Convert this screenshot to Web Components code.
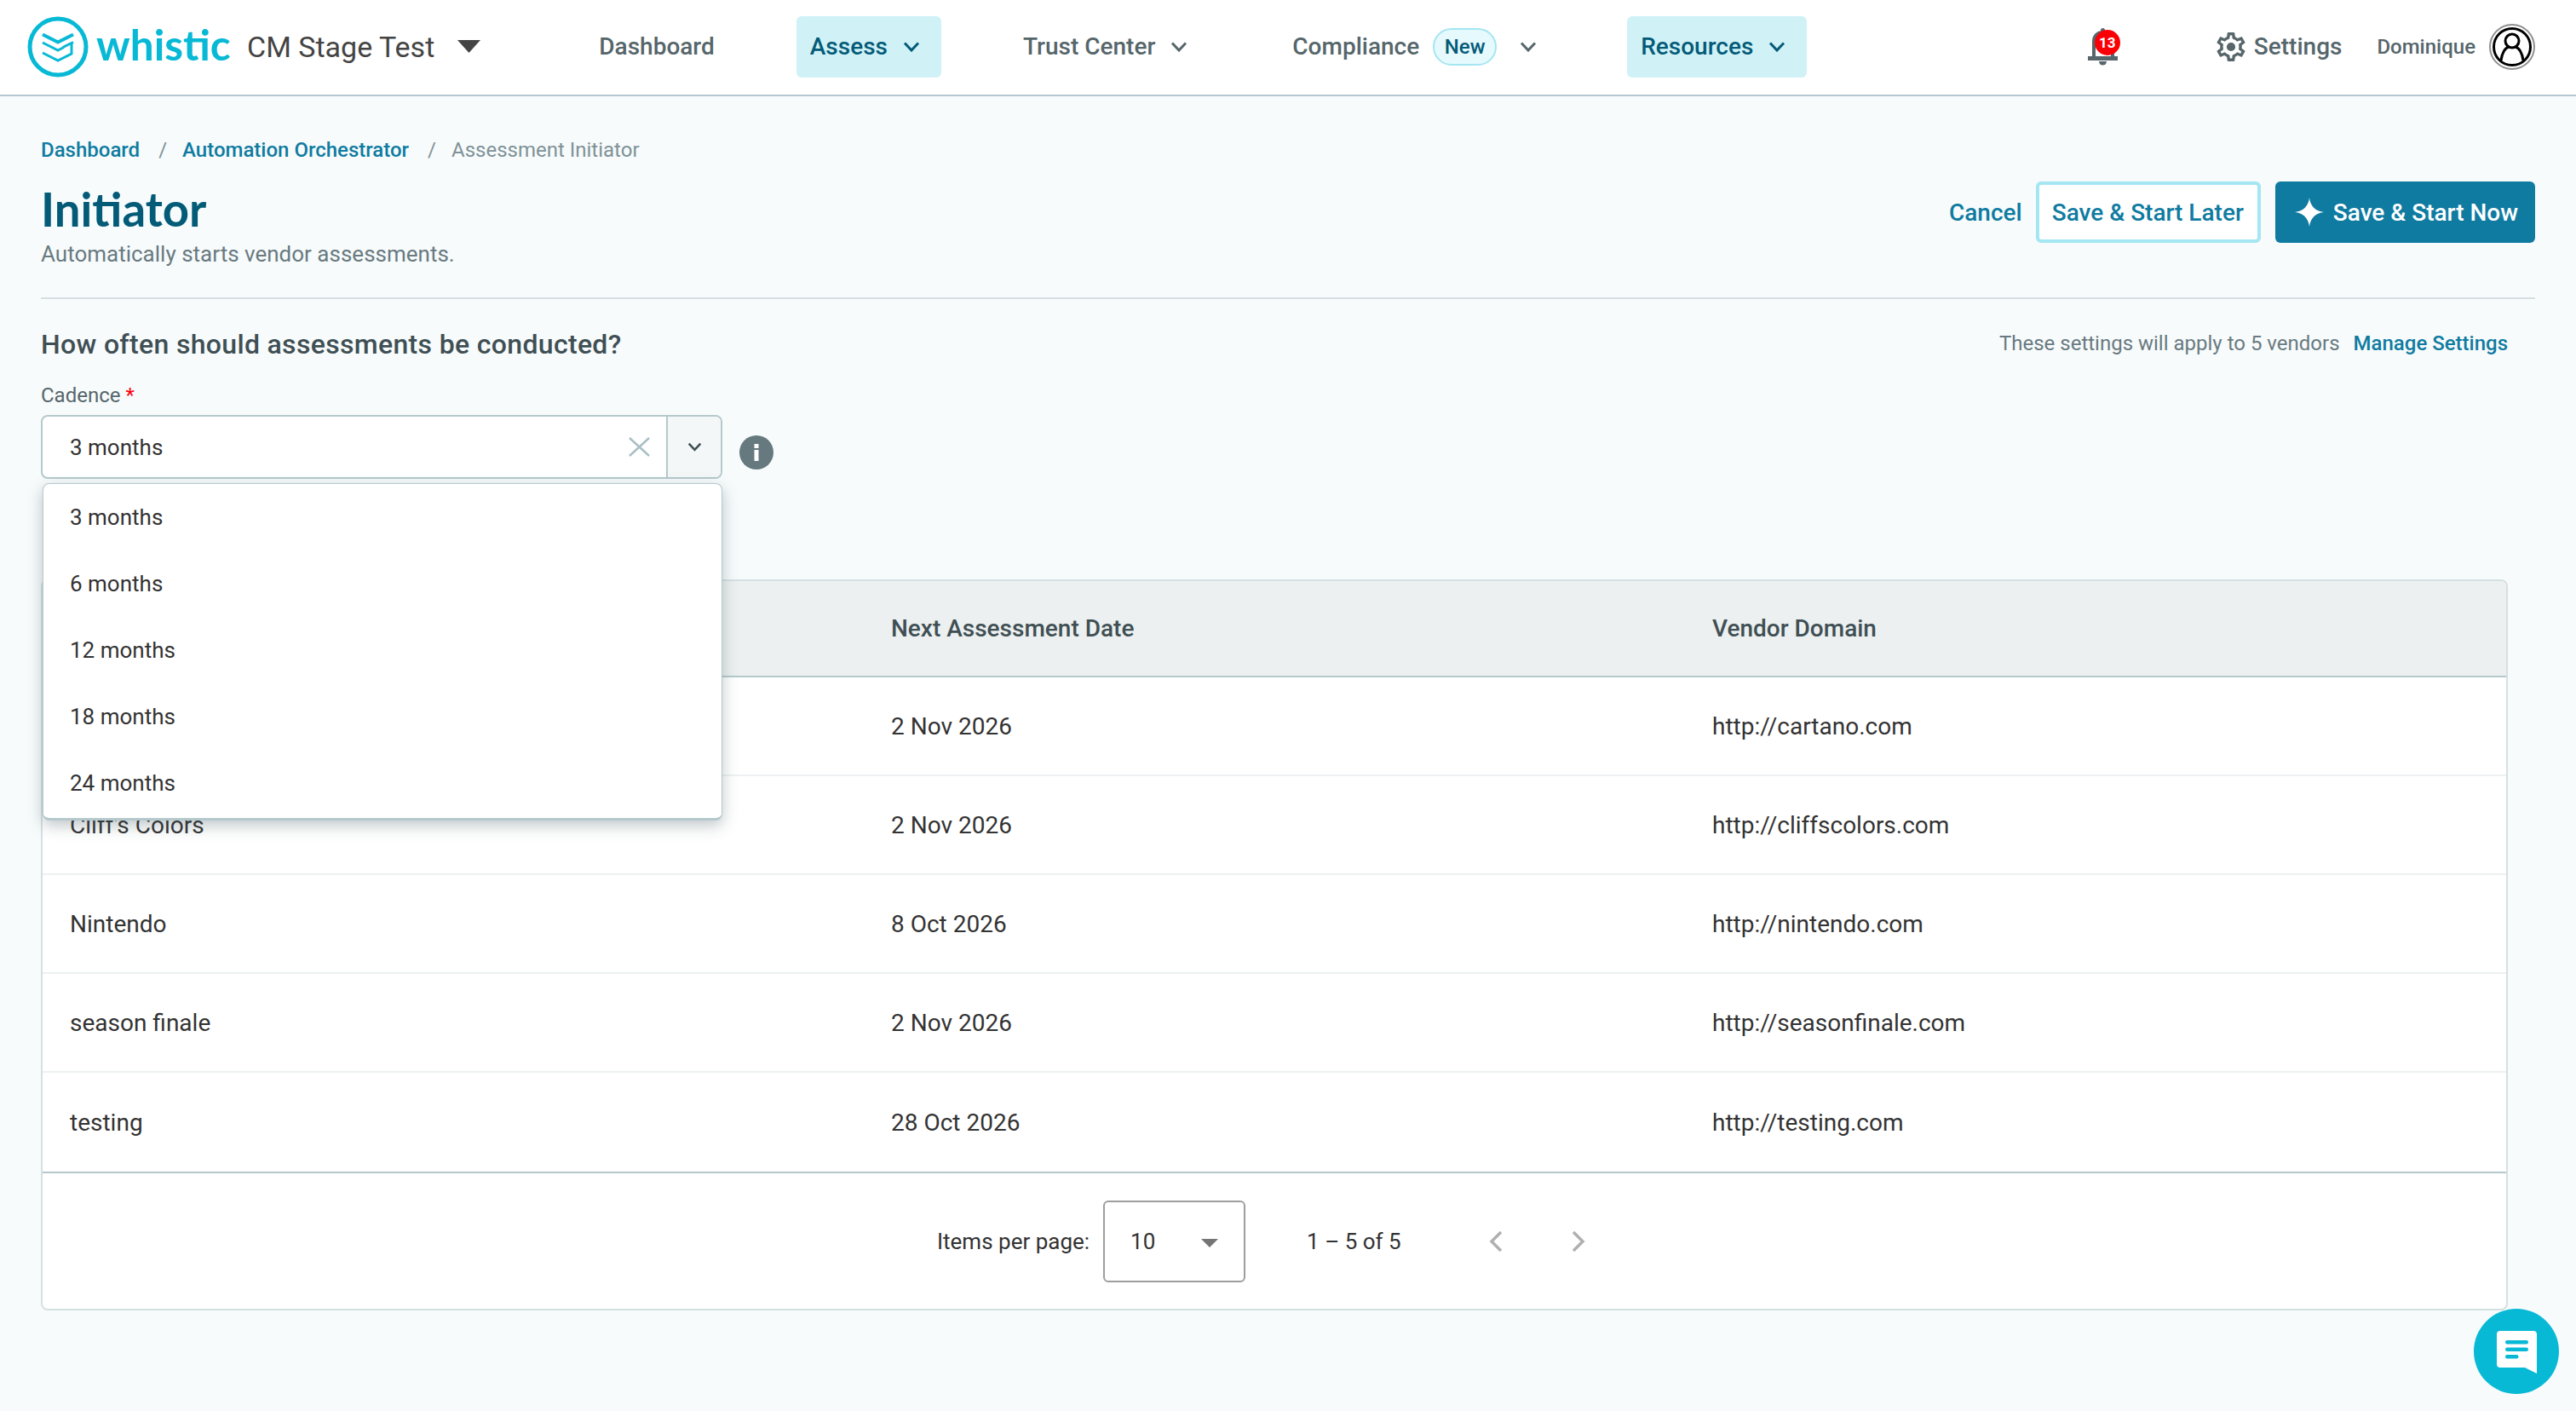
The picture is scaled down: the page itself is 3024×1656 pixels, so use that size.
<!DOCTYPE html>
<html lang="en">
<head>
<meta charset="utf-8">
<title>Initiator</title>
<style>
html, body { margin: 0; background: #f7fbfc; font-family: Roboto, "Liberation Sans", sans-serif; }
body { width: 3024px; height: 1656px; overflow: hidden; }
</style>
</head>
<body>
<wh-app>
    <wh-header slot="header"></wh-header>
    <wh-page-title></wh-page-title>
    <wh-cadence-section></wh-cadence-section>
    <wh-vendor-table>
        <wh-vendor-row head next="Next Assessment Date" domain="Vendor Domain"></wh-vendor-row>
        <wh-vendor-row next="2 Nov 2026" domain="http://cartano.com"></wh-vendor-row>
        <wh-vendor-row name="Cliff's Colors" next="2 Nov 2026" domain="http://cliffscolors.com"></wh-vendor-row>
        <wh-vendor-row name="Nintendo" next="8 Oct 2026" domain="http://nintendo.com"></wh-vendor-row>
        <wh-vendor-row name="season finale" next="2 Nov 2026" domain="http://seasonfinale.com"></wh-vendor-row>
        <wh-vendor-row name="testing" next="28 Oct 2026" domain="http://testing.com" last></wh-vendor-row>
        <wh-paginator slot="footer"></wh-paginator>
    </wh-vendor-table>
</wh-app>
<wh-chat-button></wh-chat-button>

<script>
const CHEVRON = `<svg width="20" height="12" viewBox="0 0 20 12" fill="none" stroke="currentColor" stroke-width="3"><path d="M2 1.5l8 8.5 8-8.5"/></svg>`;

class WhApp extends HTMLElement {
    constructor() {
        super();
        this.attachShadow({ mode: 'open' });
        this.shadowRoot.innerHTML = `
            <style>
                :host { display: block; height: 1656px; box-sizing: border-box; }
                main { display: block; padding: 0 48px; }
            </style>
            <slot name="header"></slot>
            <main><slot></slot></main>
        `;
    }
}

class WhNavItem extends HTMLElement {
    constructor() {
        super();
        this.attachShadow({ mode: 'open' });
        this.shadowRoot.innerHTML = `
            <style>
                :host {
                    display: flex;
                    align-items: center;
                    box-sizing: border-box;
                    height: 72px;
                    padding: 0 25px 0 16px;
                    border-radius: 6px;
                    color: #56666b;
                    font-size: 28px;
                    font-weight: 500;
                    white-space: nowrap;
                }
                :host([active]) { background: #d0f2f7; color: #045b78; }
                svg { margin-left: var(--chevron-gap, 18px); display: block; }
                :host([plain]) { padding-right: 16px; }
                :host([plain]) svg { display: none; }
            </style>
            <slot></slot>${CHEVRON}
        `;
    }
}

class WhHeader extends HTMLElement {
    constructor() {
        super();
        this.attachShadow({ mode: 'open' });
        this.shadowRoot.innerHTML = `
            <style>
                :host {
                    display: flex;
                    align-items: center;
                    box-sizing: border-box;
                    height: 113px;
                    background: #fff;
                    border-bottom: 2px solid #b6c8d0;
                    padding: 0 48px 2px 32px;
                }
                .logo { display: block; flex: none; }
                .word {
                    font-family: Lato, sans-serif;
                    font-size: 49.500px;
                    font-weight: 700;
                    color: #08b9d6;
                    margin-left: 9px;
                    width: 157px;
                    line-height: 1;
                    position: relative;
                    top: -2px;
                }
                .tenant { font-size: 34px; color: #444; margin-left: 20px; white-space: nowrap; }
                .caret { margin-left: 27px; display: block; }
                nav { display: flex; align-items: center; gap: 80px; margin-left: 123px; }
                .new {
                    display: inline-flex;
                    align-items: center;
                    justify-content: center;
                    box-sizing: border-box;
                    width: 75px;
                    height: 44px;
                    margin-left: 16px;
                    border: 2px solid #a4e6f2;
                    border-radius: 22px;
                    background: #e6f9fc;
                    color: #045b78;
                    font-size: 24px;
                }
                .compliance { margin: 0 1px 0 2px; --chevron-gap: 27px; }
                .right { display: flex; align-items: center; margin-left: auto; }
                .bell { position: relative; width: 35px; height: 44px; margin-right: 116px; }
                .bell svg { display: block; }
                .badge {
                    position: absolute;
                    left: 8px;
                    top: 2px;
                    width: 30px;
                    height: 30px;
                    border-radius: 50%;
                    background: #fb0007;
                    color: #fff;
                    font-size: 17px;
                    font-weight: 700;
                    display: flex;
                    align-items: center;
                    justify-content: center;
                }
                .settings { display: flex; align-items: center; color: #56666b; font-size: 28px; font-weight: 500; }
                .settings svg { margin-right: 10px; display: block; }
                .user { color: #56666b; font-size: 24px; font-weight: 500; margin-left: 41px; margin-right: 16px; }
                .avatar { display: block; }
            </style>
            <svg class="logo" width="72" height="72" viewBox="0 0 72 72" fill="none" stroke="#08b9d6">
                <circle cx="36" cy="36" r="33" stroke-width="5"/>
                <path d="M18 21.500l18 9 18-9" stroke-width="4" stroke-linejoin="miter"/>
                <path d="M18 31l18 9 7-3.500" stroke-width="3"/>
                <path d="M18 43l18 9 16-8V31.500" stroke-width="3"/>
                <path d="M43 37v-1l11-5.500" stroke-width="3"/>
            </svg>
            <span class="word">whistic</span>
            <span class="tenant">CM Stage Test</span>
            <svg class="caret" width="27" height="15" viewBox="0 0 27 15"><path d="M0 0h27L13.500 15z" fill="#444"/></svg>
            <nav>
                <wh-nav-item plain>Dashboard</wh-nav-item>
                <wh-nav-item active>Assess</wh-nav-item>
                <wh-nav-item>Trust Center</wh-nav-item>
                <wh-nav-item class="compliance"><span>Compliance</span><span class="new">New</span></wh-nav-item>
                <wh-nav-item active>Resources</wh-nav-item>
            </nav>
            <div class="right">
                <div class="bell">
                    <svg width="35" height="44" viewBox="0 0 35 44" fill="none">
                        <path d="M7 35V16C7 9 11 5 18 5s11 4 11 11v19" stroke="#56666b" stroke-width="4"/>
                        <path d="M15 5V2.500a2.500 2.500 0 0 1 5 0V5z" fill="#56666b"/>
                        <rect x="0" y="33" width="35" height="5" fill="#56666b"/>
                        <path d="M13 39h9a4.500 4.500 0 0 1-9 0z" fill="#56666b"/>
                    </svg>
                    <span class="badge">13</span>
                </div>
                <div class="settings">
                    <svg width="34" height="34" viewBox="2 2 20 20" fill="#56666b">
                        <path d="M19.43 12.98c.04-.32.07-.64.07-.98 0-.34-.03-.66-.07-.98l2.11-1.65c.19-.15.24-.42.12-.64l-2-3.46c-.09-.16-.26-.25-.44-.25-.06 0-.12.01-.17.03l-2.49 1c-.52-.4-1.08-.73-1.69-.98l-.38-2.65C14.46 2.18 14.25 2 14 2h-4c-.25 0-.46.18-.49.42l-.38 2.65c-.61.25-1.17.59-1.69.98l-2.49-1c-.06-.02-.12-.03-.18-.03-.17 0-.34.09-.43.25l-2 3.46c-.13.22-.07.49.12.64l2.11 1.65c-.04.32-.07.65-.07.98 0 .33.03.66.07.98l-2.11 1.65c-.19.15-.24.42-.12.64l2 3.46c.09.16.26.25.44.25.06 0 .12-.01.17-.03l2.49-1c.52.4 1.08.73 1.69.98l.38 2.65c.03.24.24.42.49.42h4c.25 0 .46-.18.49-.42l.38-2.65c.61-.25 1.17-.59 1.69-.98l2.49 1c.06.02.12.03.18.03.17 0 .34-.09.43-.25l2-3.46c.12-.22.07-.49-.12-.64l-2.11-1.65zm-1.98-1.71c.04.31.05.52.05.73 0 .21-.02.43-.05.73l-.14 1.13.89.7 1.08.84-.7 1.21-1.27-.51-1.04-.42-.9.68c-.43.32-.84.56-1.25.73l-1.06.43-.16 1.13-.2 1.35h-1.4l-.19-1.35-.16-1.13-1.06-.43c-.43-.18-.83-.41-1.23-.71l-.91-.7-1.06.43-1.27.51-.7-1.21 1.08-.84.89-.7-.14-1.13c-.03-.31-.05-.54-.05-.74s.02-.43.05-.73l.14-1.13-.89-.7-1.08-.84.7-1.21 1.27.51 1.04.42.9-.68c.43-.32.84-.56 1.25-.73l1.06-.43.16-1.13.2-1.35h1.39l.19 1.35.16 1.13 1.06.43c.43.18.83.41 1.23.71l.91.7 1.06-.43 1.27-.51.7 1.21-1.07.85-.89.7.14 1.13z"/>
                        <circle cx="12" cy="12" r="3"/>
                    </svg>
                    Settings
                </div>
                <span class="user">Dominique</span>
                <svg class="avatar" width="54" height="54" viewBox="0 0 54 54" fill="none">
                    <circle cx="27" cy="27" r="26" stroke="#8f8f8f" stroke-width="2"/>
                    <circle cx="27" cy="27" r="21.500" stroke="#000" stroke-width="3"/>
                    <circle cx="27" cy="20" r="8" stroke="#000" stroke-width="3"/>
                    <path d="M14 43c1-9 5-15 9-16M40 43c-1-9-5-15-9-16" stroke="#000" stroke-width="3"/>
                </svg>
            </div>
        `;
    }
}

class WhPageTitle extends HTMLElement {
    constructor() {
        super();
        this.attachShadow({ mode: 'open' });
        this.shadowRoot.innerHTML = `
            <style>
                :host {
                    display: block;
                    box-sizing: border-box;
                    height: 238px;
                    border-bottom: 2px solid #d5dfe3;
                    padding-top: 49px;
                }
                .crumbs { display: flex; font-size: 24px; line-height: 28px; color: #7f9297; }
                .crumbs b { font-weight: 500; color: #0f7ba1; }
                .crumbs i { font-style: normal; margin: 0 18px 0 22px; }
                .row { display: flex; justify-content: space-between; align-items: flex-start; }
                h1 {
                    margin: 23px 0 0;
                    font-family: Lato, sans-serif;
                    font-size: 54.500px;
                    line-height: 64px;
                    font-weight: 700;
                    color: #045b78;
                }
                p { margin: 5px 0 0; font-size: 26px; line-height: 32px; color: #697a80; }
                .actions { display: flex; align-items: center; margin-top: 23px; }
                .cancel { font-size: 28px; font-weight: 500; color: #0f7ba1; margin-right: 16px; }
                .btn {
                    display: flex;
                    align-items: center;
                    box-sizing: border-box;
                    height: 72px;
                    border-radius: 6px;
                    font-size: 28px;
                    font-weight: 500;
                    white-space: nowrap;
                }
                .later { background: #fff; border: 4px solid #a4e6f2; color: #0f7ba1; padding: 0 16px 0 15px; margin-right: 17px; }
                .now { background: #0f7ba1; color: #fff; padding: 0 20px 0 23px; }
                .now svg { margin-right: 11px; display: block; }
            </style>
            <div class="crumbs"><b>Dashboard</b><i>/</i><b>Automation Orchestrator</b><i>/</i><span>Assessment Initiator</span></div>
            <div class="row">
                <div>
                    <h1>Initiator</h1>
                    <p>Automatically starts vendor assessments.</p>
                </div>
                <div class="actions">
                    <span class="cancel">Cancel</span>
                    <span class="btn later">Save &amp; Start Later</span>
                    <span class="btn now">
                        <svg width="34" height="34" viewBox="0 0 34 34"><path d="M17 0c1 9.500 7 16 17 17-10 1-16 7.500-17 17-1-9.500-7-16-17-17 10-1 16-7.500 17-17z" fill="#fff"/></svg>
                        Save &amp; Start Now
                    </span>
                </div>
            </div>
        `;
    }
}

class WhCadenceSection extends HTMLElement {
    constructor() {
        super();
        this.attachShadow({ mode: 'open' });
        this.shadowRoot.innerHTML = `
            <style>
                :host { display: block; box-sizing: border-box; height: 329px; padding-top: 33px; position: relative; }
                .top { display: flex; justify-content: space-between; align-items: center; height: 40px; padding-right: 32px; }
                h2 { margin: 0; font-size: 32px; font-weight: 500; letter-spacing: .33px; color: #3f4f54; }
                .note { font-size: 24px; color: #697a80; margin-top: -2px; }
                .note b { font-weight: 500; color: #0f7ba1; margin-left: 16px; }
                label { display: block; margin-top: 26px; font-size: 24px; line-height: 28px; color: #56666b; }
                label span { color: #fb0007; }
                .field { display: flex; margin-top: 9px; align-items: flex-start; }
                .select {
                    display: flex;
                    box-sizing: border-box;
                    width: 800px;
                    height: 75px;
                    background: #fff;
                    border: 2px solid #b5c9cd;
                    border-radius: 8px;
                    overflow: hidden;
                }
                .value { flex: 1; display: flex; align-items: center; padding-left: 32px; font-size: 26px; color: #333; }
                .clear { align-self: center; margin-right: 19px; display: block; }
                .open {
                    width: 62px;
                    background: #f4f7f8;
                    border-left: 2px solid #b5c9cd;
                    color: #3f4f54;
                    display: flex;
                    align-items: center;
                    justify-content: center;
                }
                .info { margin: 24px 0 0 20px; display: block; }
                .menu {
                    position: absolute;
                    left: 2px;
                    top: 216px;
                    width: 798px;
                    box-sizing: border-box;
                    height: 396px;
                    background: #fff;
                    border: 1px solid #b5c9cd;
                    border-bottom: 3px solid #b5c9cd;
                    border-radius: 8px;
                    box-shadow: 0 6px 18px rgba(60, 80, 90, .32);
                    z-index: 2;
                }
                .menu div { height: 78px; display: flex; align-items: center; padding-left: 31px; font-size: 26px; color: #333; }
            </style>
            <div class="top">
                <h2>How often should assessments be conducted?</h2>
                <div class="note">These settings will apply to 5 vendors<b>Manage Settings</b></div>
            </div>
            <label>Cadence <span>*</span></label>
            <div class="field">
                <div class="select">
                    <div class="value">3 months</div>
                    <svg class="clear" width="25" height="23" viewBox="0 0 25 23" fill="none" stroke="#a9bfc4" stroke-width="2.500"><path d="M1 1l23 21M24 1L1 22"/></svg>
                    <div class="open"><svg width="17" height="11" viewBox="0 0 20 12" fill="none" stroke="currentColor" stroke-width="3"><path d="M2 1.500l8 8.500 8-8.500"/></svg></div>
                </div>
                <svg class="info" width="40" height="40" viewBox="0 0 40 40"><circle cx="20" cy="20" r="20" fill="#66797e"/><rect x="17.500" y="17" width="5" height="13" fill="#fff"/><rect x="17.500" y="10" width="5" height="5" fill="#fff"/></svg>
            </div>
            <div class="menu">
                <div>3 months</div><div>6 months</div><div>12 months</div><div>18 months</div><div>24 months</div>
            </div>
        `;
    }
}

class WhVendorTable extends HTMLElement {
    constructor() {
        super();
        this.attachShadow({ mode: 'open' });
        this.shadowRoot.innerHTML = `
            <style>
                :host {
                    display: block;
                    box-sizing: border-box;
                    width: 2896px;
                    height: 858px;
                    background: #fff;
                    border: 2px solid #d5e0e3;
                    border-radius: 8px;
                    overflow: hidden;
                }
            </style>
            <slot></slot>
            <slot name="footer"></slot>
        `;
    }
}

class WhVendorRow extends HTMLElement {
    constructor() {
        super();
        this.attachShadow({ mode: 'open' });
    }

    connectedCallback() {
        this.shadowRoot.innerHTML = `
            <style>
                :host {
                    display: grid;
                    grid-template-columns: 964px 964px 1fr;
                    align-items: center;
                    box-sizing: border-box;
                    height: 116px;
                    padding-left: 32px;
                    border-bottom: 2px solid #edf1f2;
                    font-size: 28px;
                    color: #333;
                }
                :host([head]) {
                    height: 113px;
                    background: #ecf0f0;
                    border-bottom: 2px solid #b5c9cd;
                    font-weight: 500;
                    color: #3f4f54;
                }
                :host([last]) { height: 118px; border-bottom: 2px solid #b5c9cd; }
            </style>
            <div>${this.getAttribute('name') || ''}</div>
            <div>${this.getAttribute('next') || ''}</div>
            <div>${this.getAttribute('domain') || ''}</div>
        `;
    }
}

class WhPaginator extends HTMLElement {
    constructor() {
        super();
        this.attachShadow({ mode: 'open' });
        this.shadowRoot.innerHTML = `
            <style>
                :host {
                    display: flex;
                    align-items: center;
                    box-sizing: border-box;
                    height: 160px;
                    padding-left: 1050px;
                    font-size: 26px;
                    color: #333;
                }
                .per {
                    display: flex;
                    align-items: center;
                    justify-content: space-between;
                    box-sizing: border-box;
                    width: 167px;
                    height: 96px;
                    margin-left: 16px;
                    padding: 0 30px;
                    border: 2px solid #9e9e9e;
                    border-radius: 6px;
                }
                .per svg { display: block; margin-top: 4px; }
                .range { margin-left: 72px; width: 214px; }
                .arrow { display: block; }
                .arrow + .arrow { margin-left: 81px; }
            </style>
            <span>Items per page:</span>
            <div class="per"><span>10</span><svg width="20" height="10" viewBox="0 0 20 10"><path d="M0 0h20L10 10z" fill="#757575"/></svg></div>
            <span class="range">1 – 5 of 5</span>
            <svg class="arrow" width="16" height="24" viewBox="0 0 16 24" fill="none" stroke="#b0b0b0" stroke-width="3.500"><path d="M14 1L3 12l11 11"/></svg>
            <svg class="arrow" width="16" height="24" viewBox="0 0 16 24" fill="none" stroke="#b0b0b0" stroke-width="3.500"><path d="M2 1l11 11L2 23"/></svg>
        `;
    }
}

class WhChatButton extends HTMLElement {
    constructor() {
        super();
        this.attachShadow({ mode: 'open' });
        this.shadowRoot.innerHTML = `
            <style>
                :host {
                    position: fixed;
                    left: 2904px;
                    top: 1536px;
                    width: 100px;
                    height: 100px;
                    border-radius: 50%;
                    background: #08b9d6;
                    display: flex;
                    align-items: center;
                    justify-content: center;
                }
                svg { display: block; margin-top: 2px; }
            </style>
            <svg width="47" height="50" viewBox="0 0 47 50">
                <path d="M4 0h39a4 4 0 0 1 4 4v46l-14-7H4a4 4 0 0 1-4-4V4a4 4 0 0 1 4-4z" fill="#fff"/>
                <rect x="10" y="11" width="27" height="4.500" rx="2.250" fill="#08b9d6"/>
                <rect x="10" y="19.500" width="27" height="4.500" rx="2.250" fill="#08b9d6"/>
                <rect x="10" y="28" width="15.500" height="4.500" rx="2.250" fill="#08b9d6"/>
            </svg>
        `;
    }
}

customElements.define('wh-app', WhApp);
customElements.define('wh-nav-item', WhNavItem);
customElements.define('wh-header', WhHeader);
customElements.define('wh-page-title', WhPageTitle);
customElements.define('wh-cadence-section', WhCadenceSection);
customElements.define('wh-vendor-table', WhVendorTable);
customElements.define('wh-vendor-row', WhVendorRow);
customElements.define('wh-paginator', WhPaginator);
customElements.define('wh-chat-button', WhChatButton);
</script>
</body>
</html>
